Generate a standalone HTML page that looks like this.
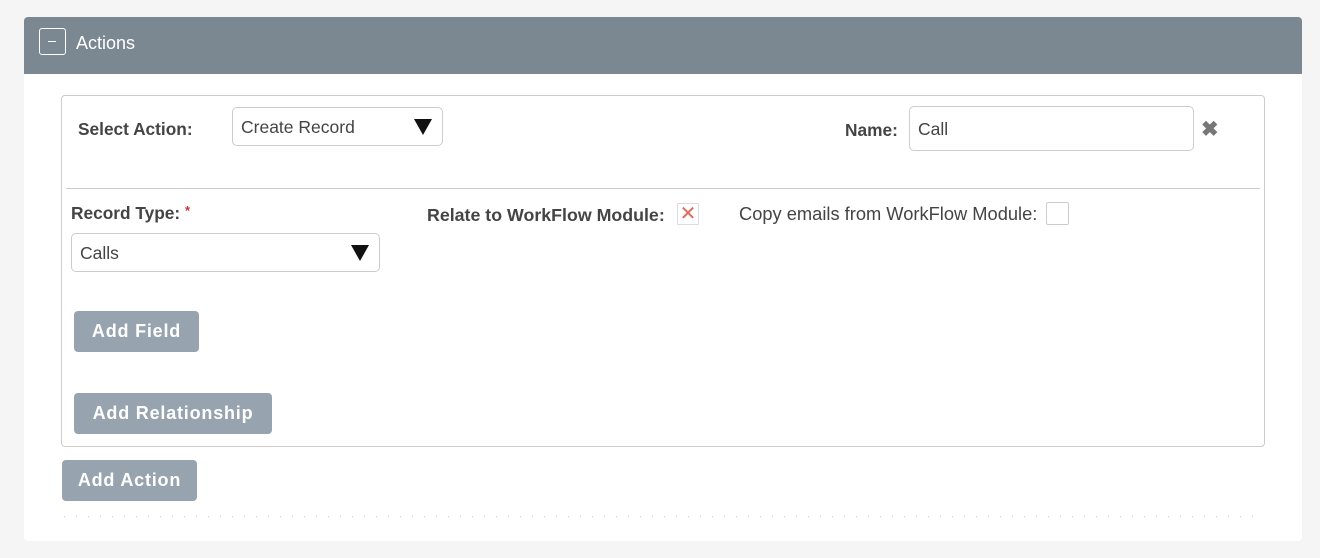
<!DOCTYPE html>
<html><head><meta charset="utf-8"><style>
*{box-sizing:border-box;margin:0;padding:0}
body{width:1320px;height:558px;background:#f5f5f5;font-family:"Liberation Sans",sans-serif;color:#444;position:relative;overflow:hidden}
.abs{position:absolute}
.panel{left:24px;top:17px;width:1278px;height:524px;background:#fff;border-radius:4px}
.hdr{left:24px;top:17px;width:1278px;height:57px;background:#7b8791;border-radius:4px 4px 0 0}
.tog{left:39px;top:28px;width:27px;height:27px;border:1.5px solid #fff;border-radius:3px}
.tog:after{content:"";position:absolute;left:8px;top:11.5px;width:8px;height:1.5px;background:#fff}
.htxt{left:76px;top:33px;color:#fff;font-size:18px}
.box{left:61px;top:95px;width:1204px;height:352px;border:1px solid #ccc;border-radius:4px}
.lbl{font-size:17.3px;font-weight:bold;color:#444}
.sel{border:1px solid #ccc;border-radius:5px;background:#fff;font-size:17.5px;color:#444;padding-left:8px}
.tri{position:absolute;right:10px;top:11px;width:0;height:0;border-left:9px solid transparent;border-right:9px solid transparent;border-top:16px solid #111}
.btn{background:#97a4b0;color:#fff;font-weight:bold;font-size:18px;border-radius:4px;text-align:center;letter-spacing:0.8px}
</style></head><body>
<div class="abs panel"></div>
<div class="abs hdr"></div>
<div class="abs tog"></div>
<div class="abs htxt">Actions</div>
<div class="abs box"></div>
<div class="abs lbl" style="left:78px;top:119px">Select Action:</div>
<div class="abs sel" style="left:232px;top:107px;width:211px;height:39px;line-height:39px">Create Record<div class="tri"></div></div>
<div class="abs lbl" style="left:845px;top:120px">Name:</div>
<div class="abs sel" style="left:909px;top:106px;width:285px;height:45px;line-height:45px">Call</div>
<div class="abs" style="left:1201px;top:117px;font-size:21px;color:#777;font-weight:bold">✖</div>
<div class="abs" style="left:66px;top:188px;width:1194px;height:1px;background:#ccc"></div>
<div class="abs lbl" style="left:71px;top:203px">Record Type: <span style="color:#c33;font-size:13px;vertical-align:top">*</span></div>
<div class="abs sel" style="left:71px;top:233px;width:309px;height:39px;line-height:39px">Calls<div class="tri"></div></div>
<div class="abs lbl" style="left:427px;top:205px;font-size:17.8px">Relate to WorkFlow Module:</div>
<div class="abs" style="left:677px;top:203px;width:22px;height:22px;border:1px solid #ddd;color:#e06a5a;font-size:20px;line-height:20px;text-align:center">✕</div>
<div class="abs" style="left:739px;top:203px;font-size:18.3px">Copy emails from WorkFlow Module:</div>
<div class="abs" style="left:1046px;top:202px;width:23px;height:23px;border:1px solid #ccc;border-radius:2px"></div>
<div class="abs btn" style="left:74px;top:311px;width:125px;height:41px;line-height:41px">Add Field</div>
<div class="abs btn" style="left:74px;top:393px;width:198px;height:41px;line-height:41px">Add Relationship</div>
<div class="abs btn" style="left:62px;top:460px;width:135px;height:41px;line-height:41px">Add Action</div>
<div class="abs" style="left:64px;top:516px;width:1190px;height:1px;background:repeating-linear-gradient(90deg,#c8c8c8 0 1px,transparent 1px 12px)"></div>
</body></html>
